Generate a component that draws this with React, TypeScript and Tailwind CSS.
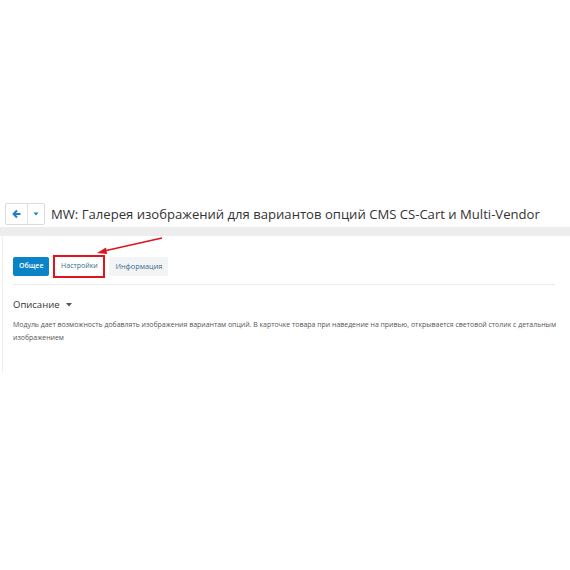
import React from "react";

export default function App() {
  return (
    <div className="relative w-[570px] h-[570px] bg-white overflow-hidden" style={{ fontFamily: '"Open Sans", "Noto Sans", sans-serif' }}>
      <div className="h-[203px]" />
      <div className="flex items-center pl-[5px] h-[22px]">
        <div className="flex h-[22px] border border-[#dcdcdc] rounded-[2px] bg-white">
          <div className="w-[22px] flex items-center justify-center border-r border-[#e3e3e3]">
            <svg width="10" height="10" viewBox="0 0 10 10">
              <path d="M5 1.5 L1.5 5 L5 8.5 M1.5 5 H8.5" stroke="#1f7fc4" strokeWidth="2" fill="none" strokeLinejoin="round" />
            </svg>
          </div>
          <div className="w-[16px] flex items-center justify-center">
            <svg width="6" height="4" viewBox="0 0 6 4">
              <path d="M0.5 0.5 L5.5 0.5 L3 3.5 Z" fill="#1f7fc4" />
            </svg>
          </div>
        </div>
        <div className="ml-[6px] text-[13.1px] leading-[22px] text-[#333] whitespace-nowrap">
          MW: Галерея изображений для вариантов опций CMS CS-Cart и Multi-Vendor
        </div>
      </div>
      <div className="mt-[2px] h-[9px] bg-[#ededed]" />
      <div className="ml-[2px] h-[137px] border-l border-[#eee] bg-white pt-[19px] pl-[10px] pr-[15px]">
        <div className="flex items-center gap-[4px] h-[23px]">
          <div className="h-[19px] px-[6px] flex items-center bg-[#0b84c7] text-white text-[7px] font-semibold rounded-[2px]">Общее</div>
          <div className="h-[23px] w-[52px] flex items-center justify-center border-2 border-[#e0141e] text-[#3a6a8a] text-[7px]">Настройки</div>
          <div className="h-[19px] px-[6px] flex items-center bg-[#f3f4f5] text-[#3a6a8a] text-[7.3px] rounded-[2px]">Информация</div>
        </div>
        <div className="mt-[6px] h-[1px] bg-[#ececec]" />
        <div className="mt-[13px] flex items-center text-[9.5px] text-[#333]">
          Описание
          <svg className="ml-[6px]" width="6" height="4" viewBox="0 0 6 4">
            <path d="M0 0 L6 0 L3 3.5 Z" fill="#555" />
          </svg>
        </div>
        <div className="mt-[6px] -mr-[12px] text-[6.95px] leading-[13px] text-[#555]">
          Модуль дает возможность добавлять изображения вариантам опций. В карточке товара при наведение на привью, открывается световой столик с детальным изображением
        </div>
      </div>
      <svg className="absolute left-0 top-0" width="570" height="570" viewBox="0 0 570 570">
        <line x1="162" y1="238" x2="104" y2="251" stroke="#e0141e" strokeWidth="1.6" />
        <path d="M97 253 L106 247.5 L107 254 Z" fill="#e0141e" />
      </svg>
    </div>
  );
}
